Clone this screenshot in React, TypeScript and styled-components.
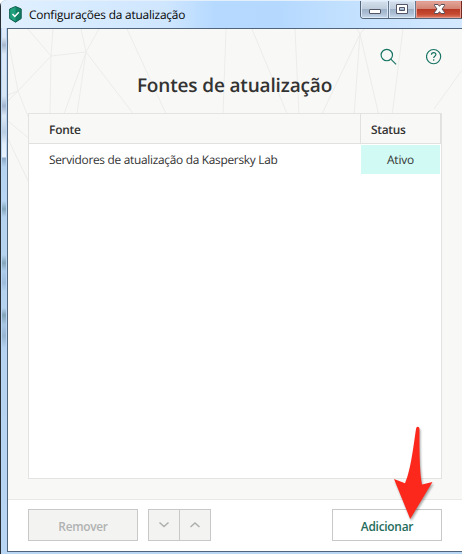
import React from 'react';
import styled, { createGlobalStyle } from 'styled-components';

const GlobalStyle = createGlobalStyle`
  * { box-sizing: border-box; }
  html, body { margin: 0; overflow: hidden; }
  body { font-family: "Open Sans", "Noto Sans", sans-serif; text-rendering: geometricPrecision; }
`;

const Window = styled.div`
  position: relative;
  width: 462px;
  height: 554px;
  display: flex;
  flex-direction: column;
  padding: 0 0 2px 1px;
  border-top-left-radius: 6px;
  background: linear-gradient(90deg, #282d34 0 1px, #b8d5f3 1px);
  overflow: hidden;
`;

const TitleBar = styled.header`
  display: flex;
  justify-content: space-between;
  align-items: flex-start;
  height: 28px;
  flex: none;
  border-top: 1px solid #e3effa;
  border-top-left-radius: 6px;
  background: linear-gradient(90deg, #e2effd 0, #dceeff 35px, #cfe6ff 165px, #b5d9ff 215px, #b4d8fe 275px, #bedeff 320px, #d4e9ff 459px);
`;

const Caption = styled.div`
  display: flex;
  align-items: center;
  height: 26px;
  padding-left: 8px;
  gap: 7px;
`;

const Label = styled.span<{ $size?: number; $track?: number; $weight?: number; $color?: string; $top?: number }>`
  display: block;
  padding-top: ${p => p.$top ?? 0}px;
  font-size: ${p => p.$size ?? 11.9}px;
  font-weight: ${p => p.$weight ?? 400};
  letter-spacing: ${p => p.$track ?? 0}px;
  color: ${p => p.$color ?? '#333'};
  line-height: 16px;
  white-space: nowrap;
`;

const Title = styled.h1`
  margin: 7px 0 0;
  padding-right: 1px;
  font-size: 19px;
  font-weight: 600;
  line-height: 26px;
  letter-spacing: -0.16px;
  color: #333;
`;

const WindowButtons = styled.div`
  display: flex;
  width: 102px;
  height: 18px;
  border: 1px solid #536579;
  border-top: 0;
  border-right: 0;
  border-radius: 0 0 0 4px;
  overflow: hidden;
`;

const WindowButton = styled.div<{ $width: number; $close?: boolean }>`
  display: flex;
  flex: none;
  justify-content: center;
  width: ${p => p.$width}px;
  border-right: 1px solid ${p => (p.$close ? '#732820' : '#65778c')};
  box-shadow: inset 0 0 0 1px ${p => (p.$close ? '#e79b8e' : '#dce8f5')};
  background: ${p => p.$close
    ? 'linear-gradient(#e3a89b 0, #d38474 45%, #b83a26 50%, #c64a31 78%, #e0846a)'
    : 'linear-gradient(#d5e0ec 0, #bfcddd 45%, #9eb2c9 50%, #adc0d5 75%, #cadcee)'};
`;

const Body = styled.div`
  position: relative;
  display: flex;
  flex-direction: column;
  flex: 1;
  margin-left: 6px;
  border: 1px solid #50657b;
  border-right: 0;
  background: #f8f8f6;
`;

const Pattern = styled.svg`
  position: absolute;
  left: 0;
  top: 0;
`;

const Heading = styled.div`
  position: relative;
  display: flex;
  flex-direction: column;
  align-items: center;
  height: 84px;
`;

const Tools = styled.div`
  display: flex;
  align-self: flex-end;
  gap: 29px;
  padding: 18px 20px 0 0;
  height: 36px;
`;

const Table = styled.div`
  position: relative;
  width: 414px;
  height: 366px;
  margin-left: 20px;
  border: 1px solid #e3e3e1;
  background: #fff;
`;

const Row = styled.div<{ $head?: boolean }>`
  display: grid;
  grid-template-columns: 331px 81px;
  height: ${p => (p.$head ? 30 : 31)}px;
  background: ${p => (p.$head ? '#f8f8f6' : '#fff')};
  border-bottom: ${p => (p.$head ? '1px solid #e1e1df' : '0')};
`;

const SourceCell = styled.div`
  display: flex;
  align-items: center;
  padding-left: 20px;
`;

const StatusCell = styled.div<{ $head?: boolean }>`
  display: flex;
  align-items: center;
  margin: ${p => (p.$head ? '0' : '1px')};
  padding-left: ${p => (p.$head ? 10 : 26)}px;
  border-left: ${p => (p.$head ? '1px solid #e1e1df' : '0')};
  border-right: ${p => (p.$head ? '1px solid #e1e1df' : '0')};
  background: ${p => (p.$head ? 'transparent' : '#d0faf3')};
`;

const Footer = styled.footer`
  position: relative;
  display: flex;
  align-items: flex-start;
  height: 52px;
  margin-top: auto;
  padding: 9px 20px 0;
  border-top: 1px solid #e9e9e7;
  background: #fff;
`;

const Button = styled.button<{ $muted?: boolean; $push?: boolean }>`
  display: flex;
  align-items: center;
  justify-content: center;
  width: 110px;
  height: 32px;
  padding: 0;
  margin-left: ${p => (p.$push ? 'auto' : '0')};
  font-family: inherit;
  border: 1px solid #c7c9c8;
  background: ${p => (p.$muted ? '#f3f3f2' : '#fff')};
`;

const OrderButtons = styled.div`
  display: flex;
  margin-left: 10px;
`;

const OrderButton = styled(Button)`
  width: 32px;
  & + & { margin-left: -1px; }
`;

const Arrow = styled.svg`
  position: absolute;
  left: 390px;
  top: 422px;
  filter: drop-shadow(1px 2px 1px rgba(0, 0, 0, 0.35));
`;

const EdgeReflections = styled.div`
  position: absolute;
  left: 2px;
  top: 28px;
  width: 4px;
  height: 525px;
  background: linear-gradient(#dfebf8 0, #dce8f5 9px, #a8b8cd 17px, #dce8f5 26px, #d6e5f4 68px, #a2b4ce 78px, #dce8f5 88px, #bacde1 104px, #e0edfa 116px, #e9f3fe 129px, #8ca8c6 130px, #b5d2ef 139px, #b8d5f3 173px, #85a7bc 181px, #b5d2ef 189px, #b5d2ef 227px, #83a5ba 235px, #adcbea 243px, #9ebddc 255px, #b5d2ef 263px, #b5d2ef 280px, #83a5b9 287px, #a9c8e6 297px, #98b5d1 308px, #b5d2f1 320px, #b8d5f3);
`;

export default function App() {
  return (
    <>
      <GlobalStyle />
      <Window>
        <TitleBar>
          <Caption>
            <svg width="13" height="17" viewBox="0 0 13 17">
              <path d="M6.5.5 12.2 3v9.5L6.5 16.2.7 12.5V3z" fill="#128064" stroke="#075b49" />
              <path d="M6.5 1v14.5L1.2 12.2V3.3z" fill="#20a07d" />
              <path d="m3.5 8 2.3 2.4 4-4.2" fill="none" stroke="#fff" strokeWidth="1.5" />
            </svg>
            <Label $track={-0.2} $top={1} $color="#050505">Configurações da atualização</Label>
          </Caption>
          <WindowButtons>
            <WindowButton $width={28}>
              <svg width="26" height="18"><rect x="7.5" y="8.5" width="11" height="4" rx=".5" fill="#fff" stroke="#535666" /></svg>
            </WindowButton>
            <WindowButton $width={27}>
              <svg width="26" height="18"><path fillRule="evenodd" d="M7.5 3.5h11v9h-11zm3 3v3h5v-3z" fill="#fff" stroke="#535666" /></svg>
            </WindowButton>
            <WindowButton $width={46} $close>
              <svg width="44" height="18"><path d="M17.5 3.5h3.5l1.5 1.8L24 3.5h3.5v1.2L25 8l2.5 3.3v1.2H24l-1.5-1.8-1.5 1.8h-3.5v-1.2L20 8l-2.5-3.3z" fill="#fff" stroke="#584c58" /></svg>
            </WindowButton>
          </WindowButtons>
        </TitleBar>
        <Body>
          <Pattern width="454" height="260" fill="none" stroke="#ececea">
            <path d="M20 0 43 27 78 23 91 0M45 0 43 27 42 85M73 0 78 23 56 85M78 23 69 85M78 23 127 87M43 27 10 62 0 72M0 10 10 62 27 105M0 66 10 62M0 92 30 117M0 110 24 160M119 0 159 87M218 0 215 87M244 0 280 87M287 0 291 87M349 0 352 5 371 87M356 0 352 5 346 87M352 5 313 87M395 0 384 87M454 41 426 80" />
          </Pattern>
          <Heading>
            <Tools>
              <svg width="17" height="18" viewBox="0 0 17 18" fill="none" stroke="#177463" strokeWidth="1.15"><circle cx="6.8" cy="8" r="5.7" /><path d="m10.8 12.1 5.3 5.2" /></svg>
              <svg width="16" height="18" viewBox="0 0 16 18" fill="none" stroke="#177463" strokeWidth="1.15"><circle cx="7.6" cy="9.6" r="7.1" /><path d="M5.4 7.8c0-3 4.5-2.8 4.5-.2 0 1.6-2.2 1.6-2.2 3.3M7.7 12.3v1.4" /></svg>
            </Tools>
            <Title>Fontes de atualização</Title>
          </Heading>
          <Table>
            <Row $head>
              <SourceCell><Label $track={-0.2} $top={3} $weight={600}>Fonte</Label></SourceCell>
              <StatusCell $head><Label $track={-0.3} $top={3} $weight={600}>Status</Label></StatusCell>
            </Row>
            <Row>
              <SourceCell><Label $track={-0.29}>Servidores de atualização da Kaspersky Lab</Label></SourceCell>
              <StatusCell><Label $track={-0.15}>Ativo</Label></StatusCell>
            </Row>
          </Table>
          <Footer>
            <Button $muted disabled><Label $track={-0.3} $top={1} $weight={600} $color="#b0b2b1">Remover</Label></Button>
            <OrderButtons>
              <OrderButton $muted disabled><svg width="12" height="8" fill="none" stroke="#adb0ae" strokeWidth="1.5"><path d="m1.5 1.5 4.5 4 4.5-4" /></svg></OrderButton>
              <OrderButton $muted disabled><svg width="12" height="8" fill="none" stroke="#adb0ae" strokeWidth="1.5"><path d="m1.5 6 4.5-4 4.5 4" /></svg></OrderButton>
            </OrderButtons>
            <Button $push><Label $track={-0.25} $top={1} $weight={600} $color="#246b5b">Adicionar</Label></Button>
          </Footer>
        </Body>
        <EdgeReflections />
        <Arrow width="48" height="105">
          <path d="M27.7 4.8c1.3 0 1.8 1 1.8 2.5-.2 17 0 43 2.5 55.2L42.5 60 20.2 97 4 57l11 4.2C21 48 24 20 26 7.2c.2-1.5.5-2.4 1.7-2.4z" fill="#fd281c" />
        </Arrow>
      </Window>
    </>
  );
}
